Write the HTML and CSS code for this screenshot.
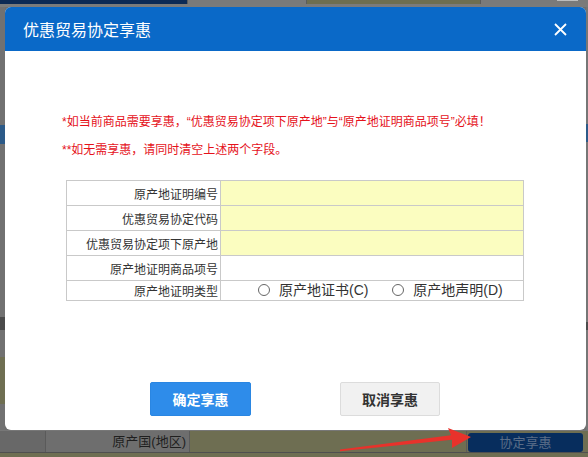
FILE: index.html
```html
<!DOCTYPE html>
<html lang="zh-CN">
<head>
<meta charset="utf-8">
<title>优惠贸易协定享惠</title>
<link rel="stylesheet" href="styles.css">
</head>
<body>
<div class="page">
  <div class="top-strip">
    <div class="ts-navy"></div>
    <div class="ts-gray"></div>
    <div class="ts-olive"></div>
    <div class="ts-gray ts-grow"><span class="ts-light"></span></div>
  </div>
  <div class="mid">
    <div class="side side-left">
      <span class="s-blue"></span><span class="s-dark"></span><span class="s-olive"></span>
    </div>
    <div class="mid-fill"></div>
    <div class="side side-right">
      <span class="s-blue"></span><span class="s-dark"></span>
    </div>
  </div>
  <div class="bottom-row">
    <div class="cell c1"></div>
    <div class="cell c2">原产国(地区)</div>
    <div class="cell c3"></div>
    <div class="cell c4"><span class="page-btn">协定享惠</span></div>
  </div>
  <div class="last-row"></div>
</div>

<div class="dialog">
  <div class="dlg-head">
    <span class="dlg-title">优惠贸易协定享惠</span>
    <svg class="dlg-close" width="13" height="13" viewBox="0 0 13 13"><path d="M1 1 L12 12 M12 1 L1 12" stroke="#fff" stroke-width="1.8" fill="none"/></svg>
  </div>
  <div class="dlg-body">
    <p class="note">*如当前商品需要享惠，“优惠贸易协定项下原产地”与“原产地证明商品项号”必填！</p>
    <p class="note">**如无需享惠，请同时清空上述两个字段。</p>
    <table class="form">
      <tr><th>原产地证明编号</th><td class="req"></td></tr>
      <tr><th>优惠贸易协定代码</th><td class="req"></td></tr>
      <tr><th>优惠贸易协定项下原产地</th><td class="req"></td></tr>
      <tr><th>原产地证明商品项号</th><td></td></tr>
      <tr class="short"><th>原产地证明类型</th><td class="radios">
        <span class="radio"><span class="circle"></span>原产地证书(C)</span>
        <span class="radio"><span class="circle"></span>原产地声明(D)</span>
      </td></tr>
    </table>
    <div class="actions">
      <button class="btn btn-primary">确定享惠</button>
      <button class="btn btn-default">取消享惠</button>
    </div>
  </div>
</div>

<svg class="arrow" width="140" height="30" viewBox="0 0 140 30">
  <polygon points="0,23.5 111,9.3 108,2 131,11 112,22 112,13.8 0,25.2" fill="#e8322b"/>
</svg>
</body>
</html>
```

FILE: styles.css
```css
* { box-sizing: border-box; }
html, body { margin: 0; padding: 0; }
body {
  width: 588px;
  height: 457px;
  overflow: hidden;
  font-family: "Liberation Sans", "Noto Sans CJK SC", sans-serif;
  position: relative;
  background: #6e6e6e;
}

/* ---- background page (dimmed) ---- */
.page {
  width: 588px;
  height: 457px;
  display: flex;
  flex-direction: column;
}
.top-strip {
  height: 7px;
  display: flex;
  border-bottom: 3px solid #7b7b7b;
}
.ts-navy { width: 187px; background: #0c2a55; }
.ts-gray { width: 119px; background: #7a7a7a; border-left: 1px solid #5c5c5c; }
.ts-olive { width: 174px; background: #6e6e50; border-left: 1px solid #5c5c5c; }
.ts-grow { flex: 1; position: relative; }
.ts-light { position: absolute; left: 76px; top: 0; width: 21px; height: 1px; background: #bdbdbd; }

.mid { flex: 1; display: flex; }
.side { width: 5px; background: #717171; display: flex; flex-direction: column; }
.side-left .s-blue { margin-top: 118px; height: 19px; background: #2c5a88; }
.side-left .s-dark { margin-top: 173px; height: 13px; background: #4a4a4a; }
.side-left .s-olive { margin-top: 27px; height: 47px; background: #6f6f52; }
.side-right { width: 2px; margin-left: auto; background: #767676; }
.side-right .s-blue { margin-top: 117px; height: 18px; background: #2c5a88; }
.side-right .s-dark { margin-top: 180px; height: 8px; background: #4c4c4c; }
.mid-fill { flex: 1; }

.bottom-row {
  height: 22px;
  display: flex;
  border-top: 1px solid #777;
}
.cell { height: 100%; border-right: 1px solid #5a5a5a; }
.c1 { width: 46px; background: #686868; }
.c2 {
  width: 144px;
  background: #6e6e6e;
  color: #1f1f1f;
  font-size: 13px;
  line-height: 22px;
  text-align: right;
  padding-right: 3px;
}
.c3 { width: 277px; background: #6e6e52; }
.c4 { flex: 1; background: #6e6e52; padding: 2px 5px 1px 1px; border-right: 0; }
.page-btn {
  display: block;
  height: 19px;
  background: #072d5d;
  border-radius: 3px;
  color: #5b6e88;
  font-size: 13px;
  line-height: 19px;
  text-align: center;
}
.last-row {
  height: 5px;
  background: #6e6e52;
  border-top: 1px solid #4f4f4f;
}

/* ---- dialog ---- */
.dialog {
  position: absolute;
  left: 5px;
  top: 7px;
  width: 581px;
  height: 423px;
  background: #fff;
  border-radius: 6px;
  overflow: hidden;
}
.dlg-head {
  height: 44px;
  background: #0a69c8;
  display: flex;
  align-items: center;
  justify-content: space-between;
  padding: 0 19px 0 18px;
}
.dlg-title {
  color: #fff;
  font-size: 16px;
  font-family: "Noto Sans CJK SC", sans-serif;
}
.dlg-close { display: block; }

.dlg-body { padding: 57px 0 0 57px; }
.note {
  margin: 0;
  color: #e5121b;
  font-size: 12px;
  line-height: 28px;
  height: 28px;
  white-space: nowrap;
}
.form {
  margin: 16px 0 0 4px;
  width: 458px;
  border-collapse: collapse;
  font-size: 12px;
  color: #333;
}
.form tr { height: 25px; }
.form tr.short { height: 20px; }
.form th, .form td {
  border: 1px solid #c9c9c9;
  padding: 0;
}
.form th {
  width: 154px;
  font-weight: normal;
  text-align: right;
  padding-right: 2px;
  white-space: nowrap;
}
.form td.req { background: #fbfdc0; }
.form td.radios {
  font-size: 14px;
  color: #333;
  white-space: nowrap;
  padding-left: 37px;
  line-height: 18px;
}
.radio { display: inline-flex; align-items: center; margin-right: 20px; }
.circle {
  width: 12px;
  height: 12px;
  border: 1px solid #666;
  border-radius: 50%;
  margin-right: 9px;
}

.actions {
  margin: 81px 0 0 88px;
  display: flex;
  gap: 89px;
}
.btn {
  width: 101px;
  height: 34px;
  border-radius: 2px;
  font-size: 14px;
  font-weight: bold;
  font-family: "Noto Sans CJK SC", sans-serif;
  padding: 0;
}
.btn-primary { background: #2e8cea; border: 1px solid #2a86e2; color: #fff; }
.btn-default { background: #f1f1f1; border: 1px solid #dcdcdc; color: #333; width: 100px; }

/* ---- annotation arrow ---- */
.arrow {
  position: absolute;
  left: 340px;
  top: 426px;
}
```
